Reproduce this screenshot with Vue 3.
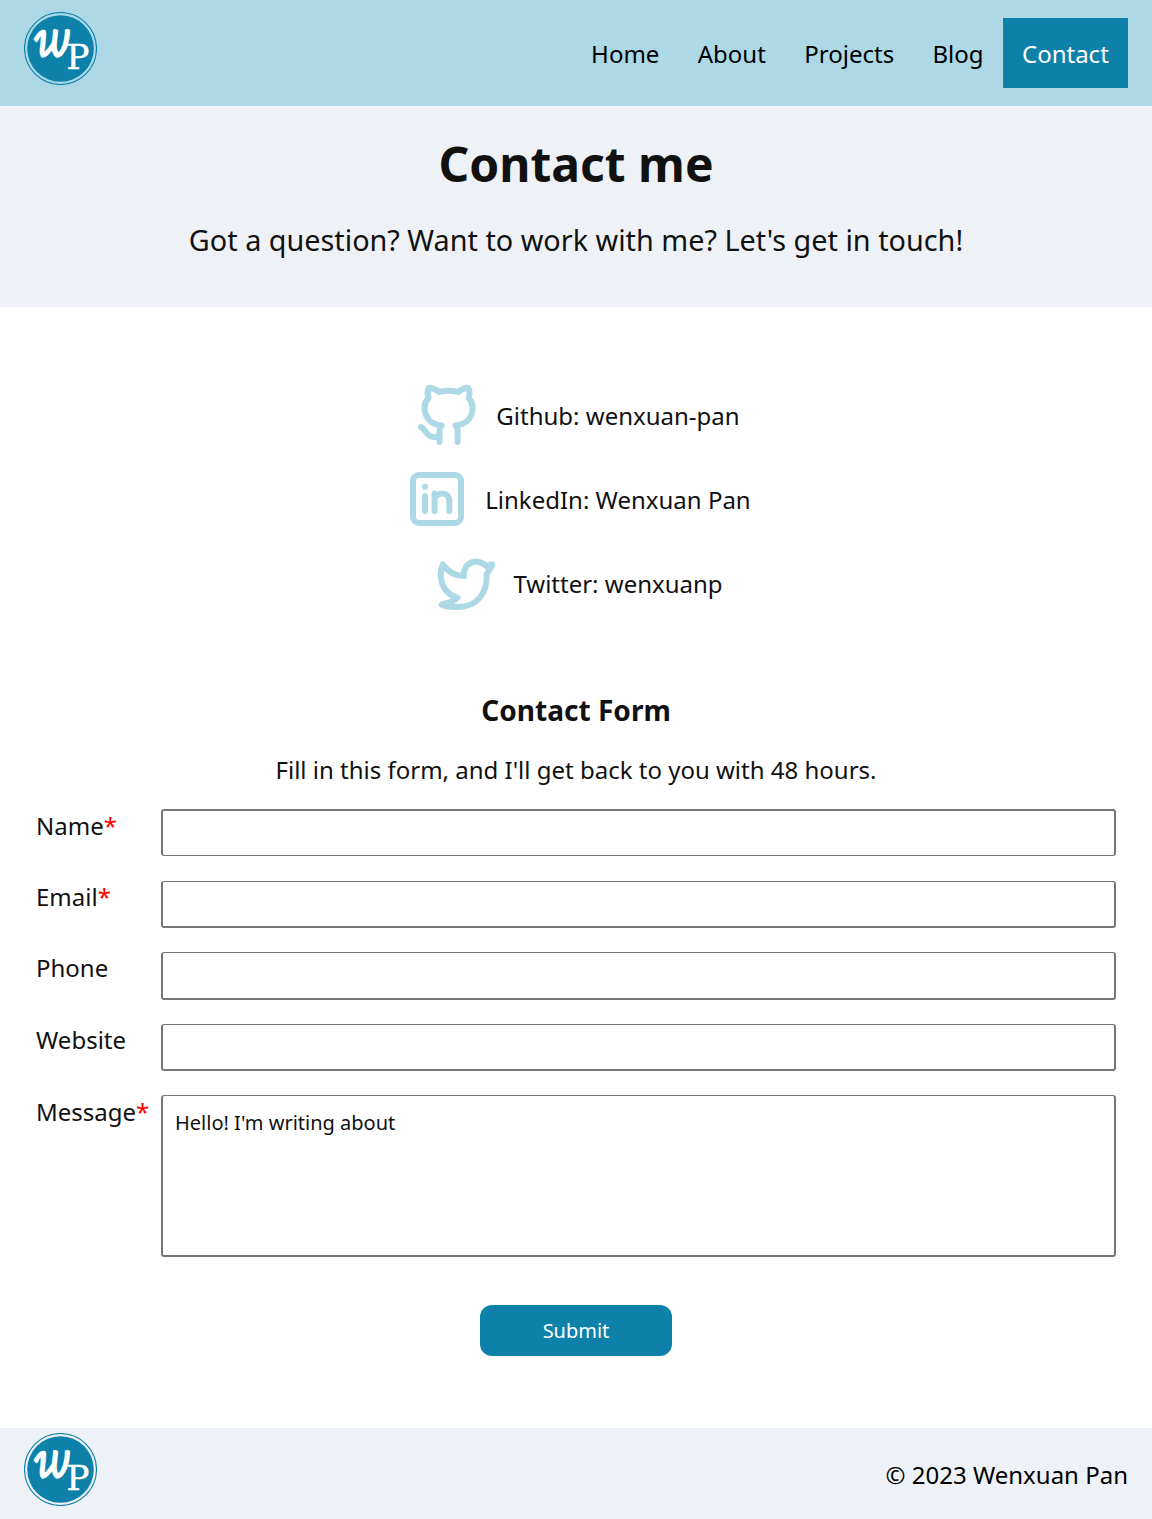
<script setup>
const links = ['Home', 'About', 'Projects', 'Blog', 'Contact']
const fields = [
  { id: 'name', label: 'Name', required: true },
  { id: 'email', label: 'Email', required: true },
  { id: 'phone', label: 'Phone', required: false },
  { id: 'website', label: 'Website', required: false },
]
const message = "Hello! I'm writing about"
</script>

<template>
  <div class="page">
    <header class="header">
      <svg class="logo" viewBox="0 0 73 73">
        <circle class="ring" cx="36.5" cy="36.5" r="36" />
        <circle class="disc" cx="36.5" cy="36.5" r="33.3" />
        <text class="script" transform="translate(10 43) scale(.84 1.1) skewX(10)">𝓌</text>
        <text class="slab" x="42.5" y="56.5">P</text>
      </svg>
      <nav class="nav">
        <a v-for="l in links" :key="l" class="link" :class="{ active: l === 'Contact' }">{{ l }}</a>
      </nav>
    </header>
    <section class="hero">
      <h1>Contact me</h1>
      <p>Got a question? Want to work with me? Let's get in touch!</p>
    </section>
    <main>
      <ul class="social">
        <li>
          <svg class="icon" viewBox="0 0 24 24"><path d="M9 19c-4.3 1.4-4.3-2.5-6-3m12.2 5v-3.5c0-1 .1-1.4-.7-2 2.8-.3 5.7-1.9 5.7-6a4.6 4.6 0 0 0-1.3-3.2 4.2 4.2 0 0 0-.1-3.3s-1.1-.3-3.5 1.3a12.3 12.3 0 0 0-6.2 0C6.700 2.700 5.600 3 5.600 3a4.200 4.200 0 0 0-.1 3.300A4.600 4.600 0 0 0 4.200 9.500c0 4.100 2.900 5.700 5.700 6-.6.6-.7 1.200-.7 2V21" /></svg>
          <span>Github: wenxuan-pan</span>
        </li>
        <li>
          <svg class="icon" viewBox="0 0 24 24"><rect x="4" y="4" width="16" height="16" rx="2" /><path d="M8 11v5M8 7.9v.01M11.2 10.2V16M16.1 16v-3.3c0-1.7-1-2.5-2.4-2.5s-2.5.9-2.5 2.5" /></svg>
          <span>LinkedIn: Wenxuan Pan</span>
        </li>
        <li>
          <svg class="icon" viewBox="0 0 24 24"><path d="M4.6 5.8C6.3 8.2 8.7 9.6 11.6 9.7C11.5 6.7 13.2 4.9 15.6 4.9C17 4.9 18.2 5.5 19 6.3L21.1 5.8C20.6 7.2 19.8 8.1 19.2 9.1C19.6 15.5 15.7 20 9.8 20C7.5 20 5.5 19.7 4.2 19.2C6.5 18.7 8.3 18.1 9.5 16.9C4.5 15.3 2.8 10.5 4.6 5.8Z" /></svg>
          <span>Twitter: wenxuanp</span>
        </li>
      </ul>
      <h2>Contact Form</h2>
      <p class="intro">Fill in this form, and I'll get back to you with 48 hours.</p>
      <form class="form" @submit.prevent>
        <div v-for="f in fields" :key="f.id" class="row" :class="f.id">
          <label :for="f.id">{{ f.label }}<span v-if="f.required" class="req">*</span></label>
          <input :id="f.id" type="text" />
        </div>
        <div class="row message">
          <label for="message">Message<span class="req">*</span></label>
          <textarea id="message" :value="message"></textarea>
        </div>
        <button type="submit">Submit</button>
      </form>
    </main>
    <footer class="footer">
      <svg class="logo" viewBox="0 0 73 73">
        <circle class="ring" cx="36.5" cy="36.5" r="36" />
        <circle class="disc" cx="36.5" cy="36.5" r="33.3" />
        <text class="script" transform="translate(10 43) scale(.84 1.1) skewX(10)">𝓌</text>
        <text class="slab" x="42.5" y="56.5">P</text>
      </svg>
      <span>© 2023 Wenxuan Pan</span>
    </footer>
  </div>
</template>

<style>
body { margin: 0; background: #fff; }
</style>

<style scoped>
.page { height: 1519px; display: flex; flex-direction: column; font: 24px/36px "Noto Sans", sans-serif; color: #111; }
.header { box-sizing: border-box; flex: none; height: 106px; padding: 12px 24px 0; background: #add8e6; display: flex; justify-content: space-between; align-items: flex-start; }
.logo { width: 73px; height: 73px; display: block; }
.ring { fill: none; stroke: #0d81aa; stroke-width: 1.1; }
.disc { fill: #0d81aa; }
.script { font: 42px "DejaVu Math TeX Gyre", serif; fill: #fff; stroke: #fff; stroke-width: 2.4; stroke-linejoin: round; }
.slab { font: 34px "DejaVu Serif", serif; fill: #fff; stroke: #fff; stroke-width: .5; }
.nav { display: flex; margin-top: 6px; }
.link { padding: 0 19.2px; line-height: 72px; height: 70.4px; color: #000; }
.link.active { background: #0d81aa; color: #fff; }
.hero { flex: none; height: 200.5px; background: #eef1f6; text-align: center; }
h1 { margin: 0; padding-top: 22px; font-size: 48px; line-height: 72px; font-weight: 700; }
.hero p { margin: 18px 0 0; font-size: 28.8px; line-height: 43px; }
main { flex: 1; }
.social { list-style: none; margin: 0; padding: 72.5px 0 0; }
.social li { height: 84px; display: flex; justify-content: center; align-items: flex-start; }
.icon { width: 72px; height: 72px; margin-right: 12px; fill: none; stroke: #add8e6; stroke-width: 2; stroke-linecap: round; stroke-linejoin: round; }
.social span { line-height: 72px; margin-top: 1px; }
h2 { margin: 58px 0 0; text-align: center; font-size: 28.08px; line-height: 43px; }
.intro { margin: 20px 0 0; text-align: center; }
.form { margin: 21px 36px 0; }
.row { display: flex; height: 71.5px; }
label { width: 125px; flex: none; line-height: 34px; white-space: nowrap; }
.email label, .phone label, .website label { line-height: 32.6px; }
.req { color: #f00; }
input, textarea { box-sizing: border-box; width: 955px; height: 47px; margin: 0; padding: 12px; border: solid #767676; border-width: 1px 2px 2px; border-radius: 3px; background: #fff; color: #111; font: 20px/30px "Noto Sans", sans-serif; resize: none; outline: none; }
.name input { border-width: 2px 2px 1px; }
.phone input { height: 48px; }
textarea { height: 162px; }
.message { height: 210px; }
button { display: block; margin: 0 auto; width: 192px; height: 51px; border: 0; border-radius: 12px; background: #0d81aa; color: #fff; font: 20px "Noto Sans", sans-serif; }
.footer { box-sizing: border-box; flex: none; height: 91px; padding: 5px 24px 0; background: #eef1f6; display: flex; justify-content: space-between; color: #000; }
.footer span { line-height: 84px; }
</style>
